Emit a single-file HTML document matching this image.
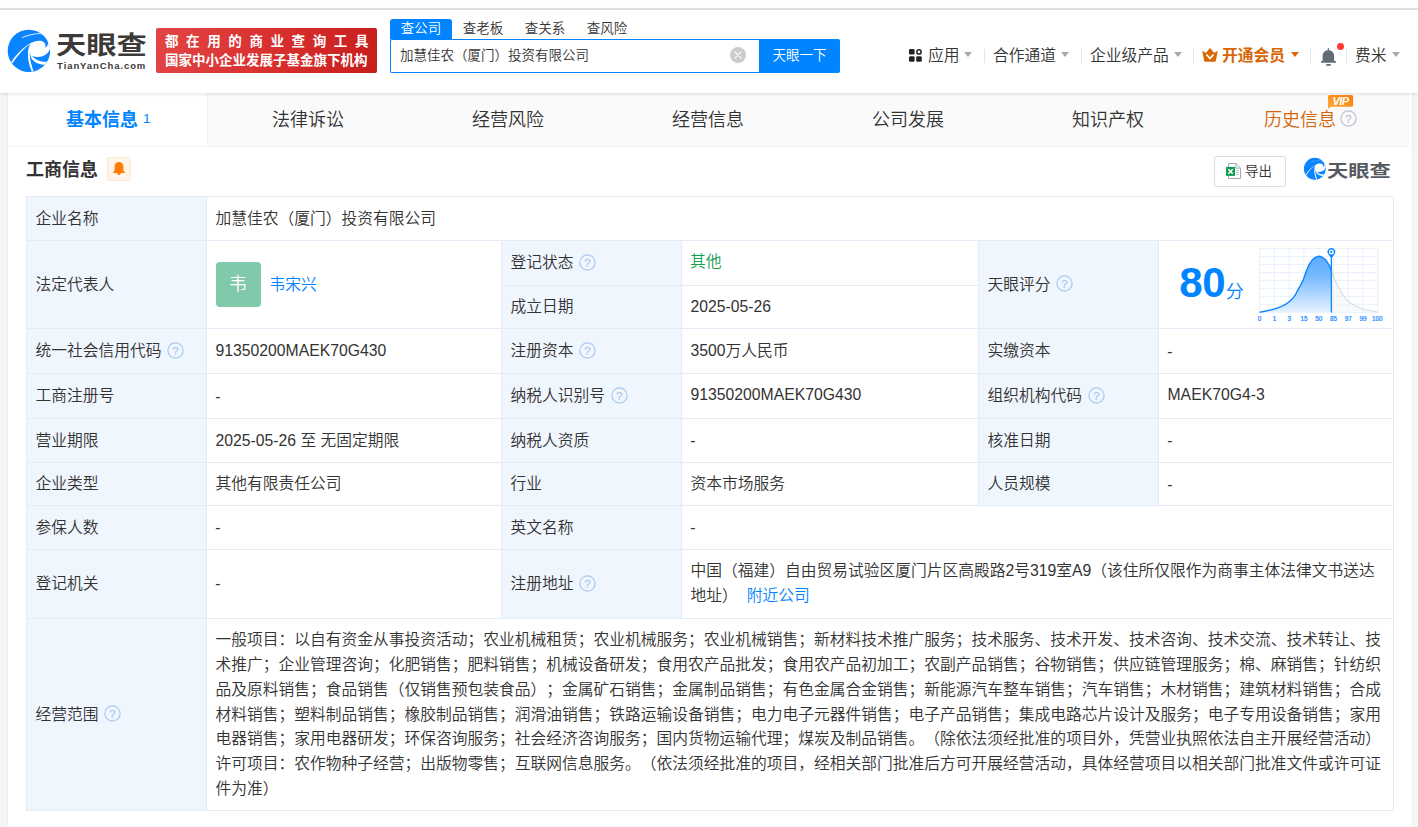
<!DOCTYPE html><html lang="zh-CN"><head><meta charset="utf-8"><title>天眼查</title><style>
*{box-sizing:border-box;margin:0;padding:0}
html,body{width:1418px;height:827px;overflow:hidden;background:#fff}
body{position:relative;font-family:"Liberation Sans","Noto Sans CJK SC",sans-serif;font-size:15.75px;color:#333;line-height:24.75px;text-spacing-trim:space-all;font-weight:350}
.abs{position:absolute}
#topline{left:0;top:8px;width:1418px;height:2px;background:#e3e3e3}
#header{left:0;top:10px;width:1418px;height:83px;background:#fff;box-shadow:0 1px 4px rgba(0,0,0,.12);z-index:5}
#pagebg{left:0;top:93px;width:1418px;height:734px;background:#f5f5f5}
#panel{left:7px;top:93px;width:1406px;height:734px;background:#fff;border-left:1px solid #ebebeb;border-right:1px solid #eee}
#tabs{left:8px;top:93px;width:1401px;height:54px;background:#fafafa;border-bottom:1px solid #f3f3f3}
.tab{position:absolute;top:0;height:53px;width:200px;text-align:center;font-size:18px;line-height:54px;color:#333}
.tab.on{background:#fff;color:#0084ff;font-weight:bold;width:200px;border-right:1px solid #f3f3f3;padding-left:1.4px}
.tab .n{font-size:13.5px;font-weight:normal;position:relative;top:-3px;margin-left:5px}
.logotxt{left:55.6px;top:16.1px;font-family:"Noto Sans CJK SC",sans-serif;font-weight:700;font-size:30px;line-height:40px;color:#3d3a39;letter-spacing:0;white-space:nowrap;transform-origin:0 0;transform:scale(1.01,0.838)}
.logosub{left:57.1px;top:48.8px;font-family:"Liberation Sans",sans-serif;font-weight:bold;font-size:9.5px;line-height:14px;color:#3d3a39;letter-spacing:0.91px;white-space:nowrap}
#banner{left:156px;top:28px;width:221px;height:45px;border-radius:2px;background:linear-gradient(100deg,#e24545 0%,#d93030 50%,#c71d1d 100%);color:#fff;font-weight:bold;font-size:13.5px;white-space:nowrap}
#banner div{position:absolute;left:9px;line-height:18px}
.stab{position:absolute;top:19px;height:20px;width:62px;text-align:center;font-size:13.5px;line-height:19px;color:#333}
.stab.on{background:#0084ff;color:#fff;border-radius:3px 3px 0 0}
#sinput{left:390px;top:39px;width:370px;height:34px;border:1px solid #0084ff;border-right:0;border-radius:2px 0 0 2px;font-size:13.5px;line-height:32px;padding-left:9px;color:#333}
#sbtn{left:759px;top:39px;width:81px;height:34px;background:#0084ff;color:#fff;font-size:13.5px;line-height:33px;text-align:center;border-radius:0 2px 2px 0}
.nav{position:absolute;top:43px;font-size:15.75px;line-height:26px;color:#333;white-space:nowrap}
.sep{position:absolute;top:49px;width:1px;height:14px;background:#dfe3ea}
.caret{position:absolute;top:52px;width:0;height:0;border-left:4.5px solid transparent;border-right:4.5px solid transparent;border-top:5.5px solid #aaa}
.sect{left:26px;top:156.7px;font-size:18px;font-weight:bold;line-height:26px;color:#333}
.c{position:absolute;border:1px solid #e3ecf6;padding:1px 9px 0 8.5px;display:flex;align-items:center;white-space:nowrap;background:#fff}
.c.l{background:#f0f6fd;padding-left:8.4px}
.qm{margin-left:6px;flex:none;position:relative;top:-1.3px}
a{color:#0084ff;text-decoration:none}
.u1{position:relative;top:-1px}
.d1{position:relative;top:1px;left:-0.3px}
.d0{position:relative;left:-0.3px}
</style></head><body>
<div class="abs" id="pagebg"></div>
<div class="abs" id="panel"></div>
<div class="abs" id="topline"></div>
<div class="abs" id="header">
<svg class="abs" viewBox="0 0 827 827" width="50" height="50" style="left:4px;top:16px">
<defs><clipPath id="lc1"><circle cx="412" cy="411" r="351"/></clipPath></defs>
<circle cx="412" cy="411" r="351" fill="#0a84ff"/>
<g clip-path="url(#lc1)" fill="#fff">
<path d="M293,190 C380,150 500,118 607,121 L800,100 L800,388 L757,388 C725,480 600,545 463,495 C530,570 640,605 725,588 L692,640 C600,640 512,612 464,548 C442,518 432,475 427,428 C420,480 434,600 490,752 L462,758 C418,660 392,560 396,450 C398,380 414,330 438,292 C335,365 222,482 134,625 L120,598 C205,465 332,345 443,283 C500,250 600,225 655,265 C688,292 690,330 685,358 C712,342 735,305 724,262 C705,200 660,155 610,131 C500,128 390,160 300,198 Z"/>
</g></svg>
<div class="abs logotxt">天眼查</div>
<div class="abs logosub">TianYanCha.com</div>
<div class="abs" id="banner" style="top:18px"><div style="top:5px;letter-spacing:7.6px">都在用的商业查询工具</div><div style="top:24px">国家中小企业发展子基金旗下机构</div></div>
<div class="stab on" style="left:390px;top:9px">查公司</div>
<div class="stab" style="left:452px;top:9px">查老板</div>
<div class="stab" style="left:514px;top:9px">查关系</div>
<div class="stab" style="left:576px;top:9px">查风险</div>
<div class="abs" id="sinput" style="top:29px">加慧佳农（厦门）投资有限公司</div>
<svg class="abs" style="left:730px;top:37px" width="16" height="16" viewBox="0 0 16 16"><circle cx="8" cy="8" r="8" fill="#ccc"/><path d="M4.9 4.9 L11.1 11.1 M11.1 4.9 L4.9 11.1" stroke="#fff" stroke-width="1.15" stroke-linecap="round"/></svg>
<div class="abs" id="sbtn" style="top:29px">天眼一下</div>
<svg class="abs" style="left:909px;top:39px" width="13" height="13" viewBox="0 0 13 13"><rect x="0" y="0" width="5.6" height="5.6" rx="1.3" fill="#222"/><rect x="0" y="7.2" width="5.6" height="5.6" rx="1.3" fill="#222"/><rect x="7.2" y="7.2" width="5.6" height="5.6" rx="1.3" fill="#222"/><circle cx="10" cy="2.9" r="2.1" fill="none" stroke="#222" stroke-width="1.5"/></svg>
<div class="nav" style="left:928px;top:33px">应用</div><div class="caret" style="left:964px;top:42px"></div><div class="sep" style="left:984px;top:39px"></div>
<div class="nav" style="left:993px;top:33px">合作通道</div><div class="caret" style="left:1061px;top:42px"></div><div class="sep" style="left:1081px;top:39px"></div>
<div class="nav" style="left:1090px;top:33px">企业级产品</div><div class="caret" style="left:1173.5px;top:42px"></div><div class="sep" style="left:1193px;top:39px"></div>
<svg class="abs" style="left:1202px;top:38.2px" width="16" height="14" viewBox="0 0 16 14"><path d="M0.2 2.7 L3.9 4.9 L7.2 0.7 Q8 -0.2 8.8 0.7 L12.1 4.9 L15.8 2.8 L13.9 12.6 Q13.7 13.7 12.8 13.7 H3.2 Q2.3 13.7 2.1 12.6 Z" fill="#d96704"/><path d="M4.5 6.5 L8 10.5 L11.5 6.5" fill="none" stroke="#fff" stroke-width="1.7"/></svg>
<div class="nav" style="left:1222px;top:33px;color:#d66606;font-weight:bold">开通会员</div><div class="caret" style="left:1290.5px;top:42px;border-top-color:#d4650a"></div><div class="sep" style="left:1310px;top:39px"></div>
<svg class="abs" style="left:1320px;top:37px" width="17" height="20" viewBox="0 0 17 20"><g fill="#636b78"><rect x="7.75" y="1" width="1.2" height="2.6" rx="0.5"/><path d="M2.6 14.2 V8.6 A5.75 5.6 0 0 1 14.1 8.6 V14.2 Z"/><rect x="0.9" y="14" width="15.1" height="1.7" rx="0.6"/><rect x="6.2" y="17.1" width="4.7" height="1.7" rx="0.4"/></g></svg>
<div class="abs" style="left:1336.95px;top:33.05px;width:6.9px;height:6.9px;border-radius:50%;background:#ff3b30"></div>
<div class="sep" style="left:1346px;top:39px"></div>
<div class="nav" style="left:1355px;top:33px">费米</div><div class="caret" style="left:1392px;top:42px"></div>
</div>
<div class="abs" id="tabs">
<div class="tab on" style="left:0">基本信息<span class="n">1</span></div>
<div class="tab" style="left:200px">法律诉讼</div>
<div class="tab" style="left:400px">经营风险</div>
<div class="tab" style="left:600px">经营信息</div>
<div class="tab" style="left:800px">公司发展</div>
<div class="tab" style="left:1000px">知识产权</div>
<div class="tab" style="left:1200px;color:#d4650a;padding-left:4.6px">历史信息<svg class="qm" style="margin-left:3.6px;top:1.4px;" width="17" height="17" viewBox="0 0 17 17"><circle cx="8.5" cy="8.5" r="7.6" fill="none" stroke="#b9c2cd" stroke-width="1.25"/><text x="8.5" y="12.5" text-anchor="middle" font-family="Liberation Sans, sans-serif" font-size="11.3" fill="#b4bdc9" stroke="#b4bdc9" stroke-width="0.15">?</text></svg></div>
</div>
<svg class="abs" style="left:1327px;top:94px;z-index:6" width="28" height="16" viewBox="0 0 28 16"><defs><linearGradient id="vg" x1="0" y1="1" x2="1" y2="0"><stop offset="0" stop-color="#ffad38"/><stop offset="0.45" stop-color="#fb9526"/><stop offset="1" stop-color="#f97d08"/></linearGradient></defs><path d="M2.5 1 H24.6 Q26.1 1 26.1 2.5 V11.3 Q26.1 12.8 24.6 12.8 H4 L1 15 V2.5 Q1 1 2.5 1 Z" fill="url(#vg)"/><text x="13.6" y="11.1" text-anchor="middle" font-family="Liberation Sans, sans-serif" font-weight="bold" font-style="italic" font-size="11" fill="#fff" letter-spacing="-0.5">VIP</text></svg>
<div class="abs sect">工商信息</div>
<div class="abs" style="left:107px;top:157px;width:24px;height:24px;background:#fff4ea;border:1px solid #fde6d2;border-radius:2.5px"><svg style="position:absolute;left:5.05px;top:3.9px" width="12" height="13.2" viewBox="0 0 12 13.2"><path d="M6 0 C9 0 10.4 2.4 10.4 5 V8.4 L12 10.4 Q12 10.9 11.5 10.9 H0.5 Q0 10.9 0 10.4 L1.6 8.4 V5 C1.6 2.4 3 0 6 0 Z" fill="#ff7d00"/><circle cx="6" cy="11.2" r="1.7" fill="#ff7d00"/></svg></div>
<div class="abs" style="left:1214px;top:156px;width:72px;height:31px;border:1px solid #ddd;border-radius:2px;background:#fff"></div>
<svg class="abs" style="left:1225px;top:162px" width="17" height="18" viewBox="0 0 17 18"><path d="M3.5 1.5 H10.9 L15.5 6.1 V16.5 H3.5 Z" fill="#fff" stroke="#a3a9b4" stroke-width="1" stroke-linejoin="round"/><path d="M10.9 1.5 V6.1 H15.5" fill="none" stroke="#a3a9b4" stroke-width="1" stroke-linejoin="round"/><path d="M11 8.5 H14 M11 10.5 H14 M11 12.5 H14" stroke="#c4c8d0" stroke-width="1"/><rect x="1.05" y="4.9" width="8.95" height="9" fill="#109d50"/><path d="M3.4 7.3 L7.7 11.8 M7.7 7.3 L3.4 11.8" stroke="#fff" stroke-width="1.5"/></svg>
<div class="abs" style="left:1245px;top:159px;font-size:13.5px;line-height:26px;color:#333">导出</div>
<svg class="abs" viewBox="0 0 827 827" width="25.7" height="25.7" style="left:1301.65px;top:156.2px">
<defs><clipPath id="lc2"><circle cx="412" cy="411" r="351"/></clipPath></defs>
<circle cx="412" cy="411" r="351" fill="#0a84ff"/>
<g clip-path="url(#lc2)" fill="#fff">
<path d="M293,190 C380,150 500,118 607,121 L800,100 L800,388 L757,388 C725,480 600,545 463,495 C530,570 640,605 725,588 L692,640 C600,640 512,612 464,548 C442,518 432,475 427,428 C420,480 434,600 490,752 L462,758 C418,660 392,560 396,450 C398,380 414,330 438,292 C335,365 222,482 134,625 L120,598 C205,465 332,345 443,283 C500,250 600,225 655,265 C688,292 690,330 685,358 C712,342 735,305 724,262 C705,200 660,155 610,131 C500,128 390,160 300,198 Z"/>
</g></svg>
<div class="abs" style="left:1327.3px;top:152.5px;font-family:'Noto Sans CJK SC',sans-serif;font-weight:700;font-size:21.5px;line-height:30px;color:#555a61;white-space:nowrap;transform-origin:0 82%;transform:scale(0.99,0.78)">天眼查</div>
<div class="c l" style="left:26px;top:196px;width:181px;height:45px;">企业名称</div>
<div class="c" style="left:206px;top:196px;width:1188px;height:45px;">加慧佳农（厦门）投资有限公司</div>
<div class="c l" style="left:26px;top:240px;width:181px;height:89px;">法定代表人</div>
<div class="c" style="left:206px;top:240px;width:296px;height:89px;"><span style="display:inline-block;width:45px;height:45px;border-radius:4px;background:#80c9ab;color:#fff;font-size:18px;line-height:45px;text-align:center;flex:none;position:relative;top:-0.2px">韦</span><a style="margin-left:9px">韦宋兴</a></div>
<div class="c l" style="left:501px;top:240px;width:181px;height:46px;">登记状态<svg class="qm" style="" width="17" height="17" viewBox="0 0 17 17"><circle cx="8.5" cy="8.5" r="7.6" fill="none" stroke="#aacbee" stroke-width="1.25"/><text x="8.5" y="12.5" text-anchor="middle" font-family="Liberation Sans, sans-serif" font-size="11.3" fill="#a4c6ec" stroke="#a4c6ec" stroke-width="0.15">?</text></svg></div>
<div class="c" style="left:681px;top:240px;width:298px;height:46px;"><span style="color:#12a053;position:relative;top:-0.7px;left:-0.5px">其他</span></div>
<div class="c l" style="left:501px;top:285px;width:181px;height:44px;">成立日期</div>
<div class="c" style="left:681px;top:285px;width:298px;height:44px;">2025-05-26</div>
<div class="c l" style="left:978px;top:240px;width:181px;height:89px;">天眼评分<svg class="qm" style="" width="17" height="17" viewBox="0 0 17 17"><circle cx="8.5" cy="8.5" r="7.6" fill="none" stroke="#aacbee" stroke-width="1.25"/><text x="8.5" y="12.5" text-anchor="middle" font-family="Liberation Sans, sans-serif" font-size="11.3" fill="#a4c6ec" stroke="#a4c6ec" stroke-width="0.15">?</text></svg></div>
<div class="c" style="left:1158px;top:240px;width:236px;height:89px;"><span style="position:absolute;left:20.3px;top:14px;font-size:42px;font-weight:bold;color:#0084ff;line-height:56px;letter-spacing:-0.5px">80</span><span style="position:absolute;left:66.8px;top:37.5px;font-size:18px;color:#0084ff;line-height:26px">分</span></div>
<div class="c l" style="left:26px;top:328px;width:181px;height:46px;">统一社会信用代码<svg class="qm" style="" width="17" height="17" viewBox="0 0 17 17"><circle cx="8.5" cy="8.5" r="7.6" fill="none" stroke="#aacbee" stroke-width="1.25"/><text x="8.5" y="12.5" text-anchor="middle" font-family="Liberation Sans, sans-serif" font-size="11.3" fill="#a4c6ec" stroke="#a4c6ec" stroke-width="0.15">?</text></svg></div>
<div class="c" style="left:206px;top:328px;width:296px;height:46px;">91350200MAEK70G430</div>
<div class="c l" style="left:501px;top:328px;width:181px;height:46px;">注册资本<svg class="qm" style="" width="17" height="17" viewBox="0 0 17 17"><circle cx="8.5" cy="8.5" r="7.6" fill="none" stroke="#aacbee" stroke-width="1.25"/><text x="8.5" y="12.5" text-anchor="middle" font-family="Liberation Sans, sans-serif" font-size="11.3" fill="#a4c6ec" stroke="#a4c6ec" stroke-width="0.15">?</text></svg></div>
<div class="c" style="left:681px;top:328px;width:298px;height:46px;">3500万人民币</div>
<div class="c l" style="left:978px;top:328px;width:181px;height:46px;">实缴资本</div>
<div class="c" style="left:1158px;top:328px;width:236px;height:46px;"><span class="d1">-</span></div>
<div class="c l" style="left:26px;top:373px;width:181px;height:46px;">工商注册号</div>
<div class="c" style="left:206px;top:373px;width:296px;height:46px;"><span class="d1">-</span></div>
<div class="c l" style="left:501px;top:373px;width:181px;height:46px;">纳税人识别号<svg class="qm" style="" width="17" height="17" viewBox="0 0 17 17"><circle cx="8.5" cy="8.5" r="7.6" fill="none" stroke="#aacbee" stroke-width="1.25"/><text x="8.5" y="12.5" text-anchor="middle" font-family="Liberation Sans, sans-serif" font-size="11.3" fill="#a4c6ec" stroke="#a4c6ec" stroke-width="0.15">?</text></svg></div>
<div class="c" style="left:681px;top:373px;width:298px;height:46px;"><span class="u1">91350200MAEK70G430</span></div>
<div class="c l" style="left:978px;top:373px;width:181px;height:46px;">组织机构代码<svg class="qm" style="" width="17" height="17" viewBox="0 0 17 17"><circle cx="8.5" cy="8.5" r="7.6" fill="none" stroke="#aacbee" stroke-width="1.25"/><text x="8.5" y="12.5" text-anchor="middle" font-family="Liberation Sans, sans-serif" font-size="11.3" fill="#a4c6ec" stroke="#a4c6ec" stroke-width="0.15">?</text></svg></div>
<div class="c" style="left:1158px;top:373px;width:236px;height:46px;"><span class="u1">MAEK70G4-3</span></div>
<div class="c l" style="left:26px;top:418px;width:181px;height:45px;">营业期限</div>
<div class="c" style="left:206px;top:418px;width:296px;height:45px;">2025-05-26 至 无固定期限</div>
<div class="c l" style="left:501px;top:418px;width:181px;height:45px;">纳税人资质</div>
<div class="c" style="left:681px;top:418px;width:298px;height:45px;"><span class="d0">-</span></div>
<div class="c l" style="left:978px;top:418px;width:181px;height:45px;">核准日期</div>
<div class="c" style="left:1158px;top:418px;width:236px;height:45px;"><span class="d0">-</span></div>
<div class="c l" style="left:26px;top:462px;width:181px;height:44px;">企业类型</div>
<div class="c" style="left:206px;top:462px;width:296px;height:44px;">其他有限责任公司</div>
<div class="c l" style="left:501px;top:462px;width:181px;height:44px;">行业</div>
<div class="c" style="left:681px;top:462px;width:298px;height:44px;">资本市场服务</div>
<div class="c l" style="left:978px;top:462px;width:181px;height:44px;">人员规模</div>
<div class="c" style="left:1158px;top:462px;width:236px;height:44px;"><span class="d1">-</span></div>
<div class="c l" style="left:26px;top:505px;width:181px;height:45px;">参保人数</div>
<div class="c" style="left:206px;top:505px;width:296px;height:45px;"><span class="d0">-</span></div>
<div class="c l" style="left:501px;top:505px;width:181px;height:45px;">英文名称</div>
<div class="c" style="left:681px;top:505px;width:713px;height:45px;"><span class="d0">-</span></div>
<div class="c l" style="left:26px;top:549px;width:181px;height:70px;">登记机关</div>
<div class="c" style="left:206px;top:549px;width:296px;height:70px;"><span class="d0">-</span></div>
<div class="c l" style="left:501px;top:549px;width:181px;height:70px;">注册地址<svg class="qm" style="" width="17" height="17" viewBox="0 0 17 17"><circle cx="8.5" cy="8.5" r="7.6" fill="none" stroke="#aacbee" stroke-width="1.25"/><text x="8.5" y="12.5" text-anchor="middle" font-family="Liberation Sans, sans-serif" font-size="11.3" fill="#a4c6ec" stroke="#a4c6ec" stroke-width="0.15">?</text></svg></div>
<div class="c" style="left:681px;top:549px;width:713px;height:70px;"><div style="position:relative;top:-0.5px">中国（福建）自由贸易试验区厦门片区高殿路2号319室A9（该住所仅限作为商事主体法律文书送达<br>地址）<a style="margin-left:9px">附近公司</a></div></div>
<div class="c l" style="left:26px;top:618px;width:181px;height:193px;">经营范围<svg class="qm" style="" width="17" height="17" viewBox="0 0 17 17"><circle cx="8.5" cy="8.5" r="7.6" fill="none" stroke="#aacbee" stroke-width="1.25"/><text x="8.5" y="12.5" text-anchor="middle" font-family="Liberation Sans, sans-serif" font-size="11.3" fill="#a4c6ec" stroke="#a4c6ec" stroke-width="0.15">?</text></svg></div>
<div class="c" style="left:206px;top:618px;width:1188px;height:193px;"><div>一般项目：以自有资金从事投资活动；农业机械租赁；农业机械服务；农业机械销售；新材料技术推广服务；技术服务、技术开发、技术咨询、技术交流、技术转让、技<br>术推广；企业管理咨询；化肥销售；肥料销售；机械设备研发；食用农产品批发；食用农产品初加工；农副产品销售；谷物销售；供应链管理服务；棉、麻销售；针纺织<br>品及原料销售；食品销售（仅销售预包装食品）；金属矿石销售；金属制品销售；有色金属合金销售；新能源汽车整车销售；汽车销售；木材销售；建筑材料销售；合成<br>材料销售；塑料制品销售；橡胶制品销售；润滑油销售；铁路运输设备销售；电力电子元器件销售；电子产品销售；集成电路芯片设计及服务；电子专用设备销售；家用<br>电器销售；家用电器研发；环保咨询服务；社会经济咨询服务；国内货物运输代理；煤炭及制品销售。（除依法须经批准的项目外，凭营业执照依法自主开展经营活动）<br>许可项目：农作物种子经营；出版物零售；互联网信息服务。（依法须经批准的项目，经相关部门批准后方可开展经营活动，具体经营项目以相关部门批准文件或许可证<br>件为准）</div></div>
<svg class="abs" style="left:1250px;top:240px" width="142" height="86" viewBox="0 0 142 86"><defs><linearGradient id="cg" x1="0" y1="0" x2="0" y2="1"><stop offset="0" stop-color="#4fa5ff"/><stop offset="0.35" stop-color="#6cb4ff"/><stop offset="1" stop-color="#e4f1ff"/></linearGradient></defs><path d="M9.60 8.60 V72.30 M9.60 8.60 H127.90 M24.39 8.60 V72.30 M9.60 16.56 H127.90 M39.17 8.60 V72.30 M9.60 24.52 H127.90 M53.96 8.60 V72.30 M9.60 32.49 H127.90 M68.75 8.60 V72.30 M9.60 40.45 H127.90 M83.54 8.60 V72.30 M9.60 48.41 H127.90 M98.33 8.60 V72.30 M9.60 56.38 H127.90 M113.11 8.60 V72.30 M9.60 64.34 H127.90 M127.90 8.60 V72.30 M9.60 72.30 H127.90" fill="none" stroke="#d9e8f8" stroke-opacity="0.6" stroke-width="1"/><path d="M81.40 72.30 L81.40 30.48 L82.07 32.22 L82.75 34.03 L83.42 36.02 L84.10 38.01 L84.77 39.83 L85.44 41.34 L86.12 42.66 L86.79 43.91 L87.47 45.16 L88.14 46.38 L88.81 47.58 L89.49 48.78 L90.16 50.05 L90.83 51.37 L91.51 52.68 L92.18 53.94 L92.86 55.11 L93.53 56.13 L94.20 56.99 L94.88 57.78 L95.55 58.54 L96.23 59.25 L96.90 59.93 L97.57 60.58 L98.25 61.19 L98.92 61.77 L99.60 62.31 L100.27 62.82 L100.94 63.30 L101.62 63.75 L102.29 64.17 L102.97 64.56 L103.64 64.94 L104.31 65.30 L104.99 65.65 L105.66 65.98 L106.33 66.30 L107.01 66.61 L107.68 66.90 L108.36 67.19 L109.03 67.46 L109.70 67.72 L110.38 67.97 L111.05 68.20 L111.73 68.43 L112.40 68.65 L113.07 68.86 L113.75 69.07 L114.42 69.26 L115.10 69.44 L115.77 69.61 L116.44 69.78 L117.12 69.94 L117.79 70.09 L118.47 70.24 L119.14 70.38 L119.81 70.52 L120.49 70.66 L121.16 70.80 L121.83 70.94 L122.51 71.07 L123.18 71.21 L123.86 71.35 L124.53 71.49 L125.20 71.64 L125.88 71.78 L126.55 71.93 L127.23 72.07 L127.90 72.22 L127.90 72.30 Z" fill="#f3f4f6" fill-opacity="0.55"/><path d="M9.60 72.30 L9.60 72.30 L10.41 72.15 L11.21 71.98 L12.02 71.81 L12.83 71.63 L13.63 71.46 L14.44 71.29 L15.25 71.12 L16.05 70.96 L16.86 70.79 L17.67 70.63 L18.47 70.47 L19.28 70.30 L20.09 70.12 L20.89 69.94 L21.70 69.75 L22.51 69.54 L23.31 69.33 L24.12 69.10 L24.93 68.86 L25.73 68.61 L26.54 68.34 L27.35 68.06 L28.16 67.77 L28.96 67.46 L29.77 67.13 L30.58 66.79 L31.38 66.43 L32.19 66.05 L33.00 65.65 L33.80 65.24 L34.61 64.80 L35.42 64.34 L36.22 63.85 L37.03 63.32 L37.84 62.74 L38.64 62.12 L39.45 61.45 L40.26 60.74 L41.06 59.97 L41.87 59.15 L42.68 58.28 L43.48 57.36 L44.29 56.38 L45.10 55.19 L45.90 53.79 L46.71 52.26 L47.52 50.68 L48.32 49.13 L49.13 47.68 L49.94 46.24 L50.74 44.78 L51.55 43.28 L52.36 41.75 L53.16 39.99 L53.97 37.82 L54.78 35.42 L55.58 33.11 L56.39 31.02 L57.20 28.96 L58.00 27.02 L58.81 25.31 L59.62 23.89 L60.42 22.60 L61.23 21.40 L62.04 20.32 L62.84 19.40 L63.65 18.67 L64.46 18.14 L65.27 17.64 L66.07 17.18 L66.88 16.79 L67.69 16.50 L68.49 16.33 L69.30 16.31 L70.11 16.44 L70.91 16.71 L71.72 17.07 L72.53 17.51 L73.33 18.00 L74.14 18.52 L74.95 19.19 L75.75 20.06 L76.56 21.10 L77.37 22.28 L78.17 23.55 L78.98 24.91 L79.79 26.55 L80.59 28.45 L81.40 30.48 L81.40 72.30 Z" fill="url(#cg)" fill-opacity="0.93"/><path d="M81.40 30.48 L82.07 32.22 L82.75 34.03 L83.42 36.02 L84.10 38.01 L84.77 39.83 L85.44 41.34 L86.12 42.66 L86.79 43.91 L87.47 45.16 L88.14 46.38 L88.81 47.58 L89.49 48.78 L90.16 50.05 L90.83 51.37 L91.51 52.68 L92.18 53.94 L92.86 55.11 L93.53 56.13 L94.20 56.99 L94.88 57.78 L95.55 58.54 L96.23 59.25 L96.90 59.93 L97.57 60.58 L98.25 61.19 L98.92 61.77 L99.60 62.31 L100.27 62.82 L100.94 63.30 L101.62 63.75 L102.29 64.17 L102.97 64.56 L103.64 64.94 L104.31 65.30 L104.99 65.65 L105.66 65.98 L106.33 66.30 L107.01 66.61 L107.68 66.90 L108.36 67.19 L109.03 67.46 L109.70 67.72 L110.38 67.97 L111.05 68.20 L111.73 68.43 L112.40 68.65 L113.07 68.86 L113.75 69.07 L114.42 69.26 L115.10 69.44 L115.77 69.61 L116.44 69.78 L117.12 69.94 L117.79 70.09 L118.47 70.24 L119.14 70.38 L119.81 70.52 L120.49 70.66 L121.16 70.80 L121.83 70.94 L122.51 71.07 L123.18 71.21 L123.86 71.35 L124.53 71.49 L125.20 71.64 L125.88 71.78 L126.55 71.93 L127.23 72.07 L127.90 72.22" fill="none" stroke="#c9d3dd" stroke-width="1"/><path d="M9.60 72.30 L10.41 72.15 L11.21 71.98 L12.02 71.81 L12.83 71.63 L13.63 71.46 L14.44 71.29 L15.25 71.12 L16.05 70.96 L16.86 70.79 L17.67 70.63 L18.47 70.47 L19.28 70.30 L20.09 70.12 L20.89 69.94 L21.70 69.75 L22.51 69.54 L23.31 69.33 L24.12 69.10 L24.93 68.86 L25.73 68.61 L26.54 68.34 L27.35 68.06 L28.16 67.77 L28.96 67.46 L29.77 67.13 L30.58 66.79 L31.38 66.43 L32.19 66.05 L33.00 65.65 L33.80 65.24 L34.61 64.80 L35.42 64.34 L36.22 63.85 L37.03 63.32 L37.84 62.74 L38.64 62.12 L39.45 61.45 L40.26 60.74 L41.06 59.97 L41.87 59.15 L42.68 58.28 L43.48 57.36 L44.29 56.38 L45.10 55.19 L45.90 53.79 L46.71 52.26 L47.52 50.68 L48.32 49.13 L49.13 47.68 L49.94 46.24 L50.74 44.78 L51.55 43.28 L52.36 41.75 L53.16 39.99 L53.97 37.82 L54.78 35.42 L55.58 33.11 L56.39 31.02 L57.20 28.96 L58.00 27.02 L58.81 25.31 L59.62 23.89 L60.42 22.60 L61.23 21.40 L62.04 20.32 L62.84 19.40 L63.65 18.67 L64.46 18.14 L65.27 17.64 L66.07 17.18 L66.88 16.79 L67.69 16.50 L68.49 16.33 L69.30 16.31 L70.11 16.44 L70.91 16.71 L71.72 17.07 L72.53 17.51 L73.33 18.00 L74.14 18.52 L74.95 19.19 L75.75 20.06 L76.56 21.10 L77.37 22.28 L78.17 23.55 L78.98 24.91 L79.79 26.55 L80.59 28.45 L81.40 30.48" fill="none" stroke="#0a84ff" stroke-width="1.4" stroke-linejoin="round"/><path d="M81.40 17.00 V72.60" stroke="#0a84ff" stroke-width="1.3"/><path d="M81.40 18.60 L78.40 14.25 A3.8 3.8 0 1 1 84.40 14.25 Z" fill="#0a84ff"/><circle cx="81.40" cy="11.95" r="2.5" fill="#fff"/><circle cx="81.40" cy="11.95" r="1.15" fill="#0a84ff"/><text x="9.60" y="80.70" text-anchor="middle" font-family="Liberation Sans, sans-serif" font-size="6.3" fill="#1a8cff" stroke="#1a8cff" stroke-width="0.22">0</text><text x="24.39" y="80.70" text-anchor="middle" font-family="Liberation Sans, sans-serif" font-size="6.3" fill="#1a8cff" stroke="#1a8cff" stroke-width="0.22">1</text><text x="39.17" y="80.70" text-anchor="middle" font-family="Liberation Sans, sans-serif" font-size="6.3" fill="#1a8cff" stroke="#1a8cff" stroke-width="0.22">3</text><text x="53.96" y="80.70" text-anchor="middle" font-family="Liberation Sans, sans-serif" font-size="6.3" fill="#1a8cff" stroke="#1a8cff" stroke-width="0.22">15</text><text x="68.75" y="80.70" text-anchor="middle" font-family="Liberation Sans, sans-serif" font-size="6.3" fill="#1a8cff" stroke="#1a8cff" stroke-width="0.22">50</text><text x="83.54" y="80.70" text-anchor="middle" font-family="Liberation Sans, sans-serif" font-size="6.3" fill="#1a8cff" stroke="#1a8cff" stroke-width="0.22">85</text><text x="98.33" y="80.70" text-anchor="middle" font-family="Liberation Sans, sans-serif" font-size="6.3" fill="#1a8cff" stroke="#1a8cff" stroke-width="0.22">97</text><text x="113.11" y="80.70" text-anchor="middle" font-family="Liberation Sans, sans-serif" font-size="6.3" fill="#1a8cff" stroke="#1a8cff" stroke-width="0.22">99</text><text x="127.30" y="80.70" text-anchor="middle" font-family="Liberation Sans, sans-serif" font-size="6.3" fill="#1a8cff" stroke="#1a8cff" stroke-width="0.22">100</text></svg></body></html>
